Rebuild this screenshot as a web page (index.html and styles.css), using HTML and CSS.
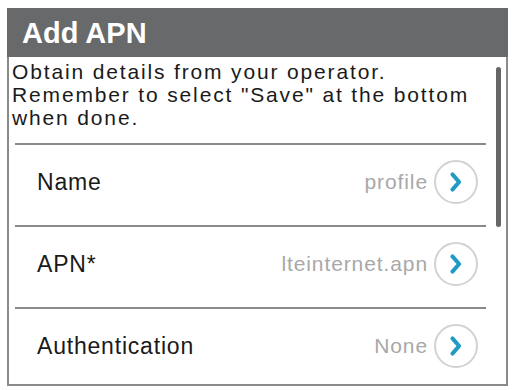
FILE: index.html
```html
<!DOCTYPE html>
<html>
<head>
<meta charset="utf-8">
<link rel="stylesheet" href="styles.css">
</head>
<body>
<div class="dialog">
  <div class="header">Add APN</div>
  <div class="content">
    <div class="scrollbar"></div>
    <p class="intro">Obtain details from your operator.<br>Remember to select "Save" at the bottom<br>when done.</p>
    <div class="list">
      <div class="row">
        <span class="label">Name</span>
        <span class="value">profile</span>
        <span class="go"><svg viewBox="0 0 36 36" width="32" height="32"><path d="M14 9.5 L21.5 18 L14 26.5" fill="none" stroke="#1f9bc6" stroke-width="4.5" stroke-linecap="round" stroke-linejoin="round"/></svg></span>
      </div>
      <div class="row">
        <span class="label">APN*</span>
        <span class="value">lteinternet.apn</span>
        <span class="go"><svg viewBox="0 0 36 36" width="32" height="32"><path d="M14 9.5 L21.5 18 L14 26.5" fill="none" stroke="#1f9bc6" stroke-width="4.5" stroke-linecap="round" stroke-linejoin="round"/></svg></span>
      </div>
      <div class="row">
        <span class="label">Authentication</span>
        <span class="value">None</span>
        <span class="go"><svg viewBox="0 0 36 36" width="32" height="32"><path d="M14 9.5 L21.5 18 L14 26.5" fill="none" stroke="#1f9bc6" stroke-width="4.5" stroke-linecap="round" stroke-linejoin="round"/></svg></span>
      </div>
    </div>
  </div>
</div>
</body>
</html>
```

FILE: styles.css
```css
html, body {
  margin: 0;
  padding: 0;
  background: #ffffff;
}
body {
  font-family: "Liberation Sans", Arial, sans-serif;
  color: #1e1e1e;
}
.dialog {
  margin: 8px 4px 0 7px;
  width: 501px;
}
.header {
  box-sizing: border-box;
  height: 49px;
  background: #68696b;
  color: #ffffff;
  font-weight: bold;
  font-size: 29px;
  padding: 3px 0 0 15px;
  line-height: 44px;
}
.content {
  position: relative;
  height: 327px;
  border: 2px solid #8a8a8a;
  border-top: none;
  overflow: hidden;
}
.scrollbar {
  position: absolute;
  right: 5px;
  top: 10px;
  width: 5px;
  height: 160px;
  background: #666666;
  border-radius: 3px;
}
.intro {
  margin: 0 0 14px 0;
  padding: 3px 20px 0 3px;
  font-size: 21px;
  line-height: 23px;
  letter-spacing: 1.85px;
  color: #1a1a1a;
}
.list {
  margin: 0 20px 0 6px;
}
.row {
  box-sizing: border-box;
  height: 82px;
  border-top: 2px solid #8a8a8a;
  display: flex;
  align-items: center;
  padding: 0 8px 6px 22px;
}
.label {
  flex: 1;
  font-size: 23px;
  letter-spacing: 0.8px;
  color: #1a1a1a;
}
.value {
  font-size: 21px;
  letter-spacing: 0.9px;
  color: #a8a8a8;
  margin-right: 6px;
}
.go {
  box-sizing: border-box;
  width: 44px;
  height: 44px;
  border: 2px solid #d2d2d2;
  border-radius: 50%;
  display: flex;
  align-items: center;
  justify-content: center;
}
.go svg {
  display: block;
}
```
